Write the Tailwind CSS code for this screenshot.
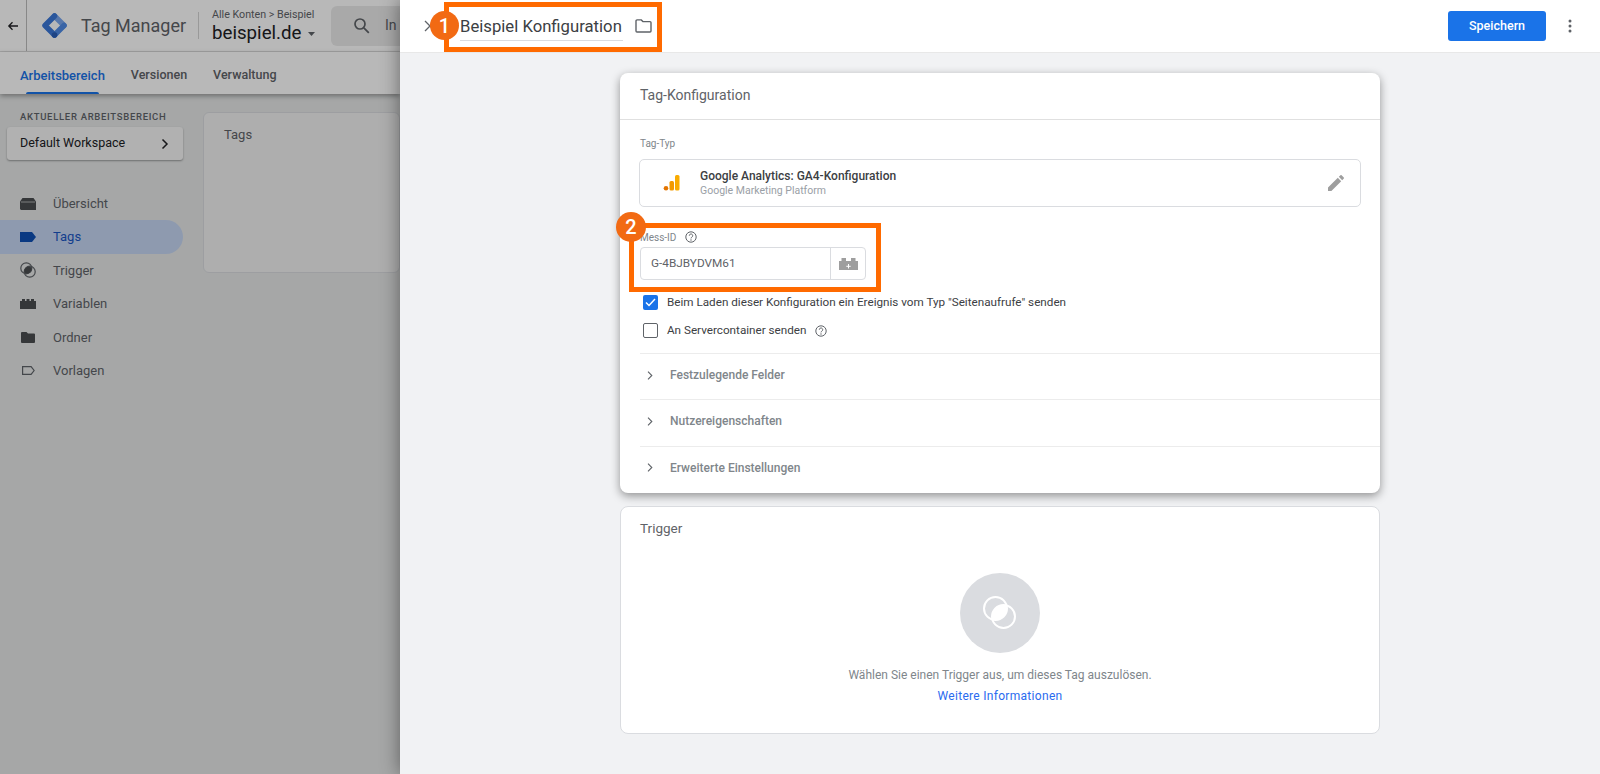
<!DOCTYPE html>
<html lang="de">
<head>
  <meta charset="UTF-8" />
  <title>Tag Manager - Beispiel Konfiguration</title>
  <script src="https://cdn.jsdelivr.net/npm/@tailwindcss/browser@4"></script>
</head>
<body class="font-['Roboto',sans-serif] bg-[#f1f2f4] text-[#202124] overflow-hidden">
<div class="relative flex w-[1600px] h-[774px] overflow-hidden">

  <!-- Linke Seite, abgedunkelt -->
  <div class="relative w-[400px] h-full shrink-0 overflow-hidden bg-[#e6e8e8]">
    <header class="h-[52px] bg-white border-b border-[#e0e0e0] flex items-center w-[700px]">
      <div class="w-[27px] shrink-0 h-full border-r border-[#bdbdbd] flex items-center justify-center">
        <svg width="12" height="12" viewBox="0 0 12 12"><path d="M11 6H2M5.500 2.200 1.800 6l3.700 3.800" fill="none" stroke="#202124" stroke-width="1.300"/></svg>
      </div>
      <svg class="ml-[15px] shrink-0" width="25" height="25" viewBox="0 0 25 25">
        <path d="M12.500 3 22 12.500" fill="none" stroke="#7aa7ee" stroke-width="5.500" stroke-linecap="round"/>
        <path d="M22 12.500 12.500 22" fill="none" stroke="#4f8be6" stroke-width="5.500" stroke-linecap="round"/>
        <path d="M12.500 3 3 12.500 12.500 22" fill="none" stroke="#3b78d8" stroke-width="5.500" stroke-linecap="round" stroke-linejoin="round"/>
        <circle cx="12.500" cy="22" r="2.800" fill="#2a5fb8"/>
      </svg>
      <span class="ml-[14px] shrink-0 text-[18px] text-[#5f6368] w-[117px] whitespace-nowrap">Tag Manager</span>
      <div class="w-px shrink-0 h-[27px] bg-[#d5d5d5]"></div>
      <div class="ml-[13px] mt-[1px] shrink-0 w-[119px]">
        <div class="text-[10.700px] leading-[14px] text-[#5f6368] whitespace-nowrap">Alle Konten &gt; Beispiel</div>
        <div class="flex items-center text-[18.700px] leading-[22px] text-[#202124]">beispiel.de
          <svg class="ml-[7px] mt-[2px]" width="7" height="4" viewBox="0 0 7 4"><path d="M0 0h7L3.500 4Z" fill="#5f6368"/></svg>
        </div>
      </div>
      <div class="shrink-0 w-[300px] h-[40px] rounded-[6px] bg-[#ebebeb] flex items-center pl-[22px]">
        <svg width="17" height="17" viewBox="0 0 17 17"><circle cx="7" cy="7" r="5" fill="none" stroke="#5f6368" stroke-width="1.700"/><path d="m10.800 10.800 5 5" stroke="#5f6368" stroke-width="1.800"/></svg>
        <span class="ml-[15px] text-[14px] text-[#5f6368]">In</span>
      </div>
    </header>
    <nav class="h-[42px] bg-white flex pl-[20px] gap-[26px] text-[12.500px] font-medium text-[#5f6368] shadow-[0_2px_5px_rgba(0,0,0,.35)] relative">
      <a class="relative pt-[14px] text-[13px] text-[#1a73e8]">Arbeitsbereich
        <span class="absolute left-[6px] right-[6px] bottom-0 h-[2px] rounded-t bg-[#1a73e8]"></span></a>
      <a class="pt-[14px]">Versionen</a>
      <a class="pt-[14px]">Verwaltung</a>
    </nav>
    <div class="flex">
      <aside class="w-[183px] shrink-0">
        <div class="pl-[20px] pt-[17px] text-[9.500px] leading-[12px] font-medium tracking-[.7px] text-[#5f6368] whitespace-nowrap">AKTUELLER ARBEITSBEREICH</div>
        <div class="ml-[7px] mt-[4px] w-[176px] h-[33px] rounded-[3px] bg-[#f6f6f6] shadow-[0_1px_2px_rgba(0,0,0,.35)] flex items-center justify-between pl-[13px] pr-[14px] text-[12.500px] text-[#202124]">
          Default Workspace
          <svg width="8" height="12" viewBox="0 0 8 12"><path d="m1.500 1.500 4.500 4.500-4.500 4.500" fill="none" stroke="#202124" stroke-width="1.500"/></svg>
        </div>
        <ul class="mt-[27px] text-[13px] text-[#5f6368]">
          <li class="h-[33.400px] flex items-center pl-[20px] gap-[17px]">
            <svg width="16" height="12" viewBox="0 0 16 12"><path d="M0 11V3.500L2.500 0h11L16 3.500V12H1Z" fill="#4a4d50"/><path d="M1 4h14" stroke="#c8c8c8" stroke-width=".8"/></svg>
            Übersicht</li>
          <li class="h-[33.400px] flex items-center pl-[20px] gap-[17px] rounded-r-full bg-[#c5d6f3] text-[#1a56c4]">
            <svg width="16" height="10" viewBox="0 0 16 10"><path d="M0 0h12l4 5-4 5H0Z" fill="#0f4fb4"/></svg>
            Tags</li>
          <li class="h-[33.400px] flex items-center pl-[20px] gap-[17px]">
            <svg width="16" height="16" viewBox="0 0 16 16"><circle cx="6.300" cy="6.300" r="5.500" fill="none" stroke="#5f6368" stroke-width="1.200"/><circle cx="9.700" cy="9.700" r="5.500" fill="none" stroke="#5f6368" stroke-width="1.200"/><path d="M9.700 4.200A5.500 5.500 0 0 1 11.800 6.300 5.500 5.500 0 0 1 6.300 11.800 5.500 5.500 0 0 1 4.200 9.700 5.500 5.500 0 0 1 9.700 4.200Z" fill="#4a4d50"/></svg>
            Trigger</li>
          <li class="h-[33.400px] flex items-center pl-[20px] gap-[17px]">
            <svg width="16" height="10" viewBox="0 0 16 10"><path d="M0 10V2h2V0h3v2h1.500V0h3v2H11V0h3v2h2v8Z" fill="#4a4d50"/></svg>
            Variablen</li>
          <li class="h-[33.400px] flex items-center pl-[21px] gap-[18px]">
            <svg width="14" height="11" viewBox="0 0 14 11"><path d="M1 0h4.500l1.500 1.500h6a1 1 0 0 1 1 1V10a1 1 0 0 1-1 1H1a1 1 0 0 1-1-1V1a1 1 0 0 1 1-1Z" fill="#4a4d50"/></svg>
            Ordner</li>
          <li class="h-[33.400px] flex items-center pl-[22px] gap-[18px]">
            <svg width="13" height="9" viewBox="0 0 13 9"><path d="M.6.6h8.500l3 3.900-3 3.900H.6Z" fill="none" stroke="#5f6368" stroke-width="1.200"/></svg>
            Vorlagen</li>
        </ul>
      </aside>
      <div class="ml-[20px] mt-[18px] w-[300px] h-[161px] rounded-[6px] bg-[#f2f2f2] border border-[#dadce0] pl-[20px] pt-[12px] text-[13px] text-[#5f6368]">Tags</div>
    </div>
    <div class="absolute inset-0 bg-black/28"></div>
  </div>

  <!-- Rechtes Panel -->
  <main class="relative flex-1 bg-[#f1f2f4] shadow-[0_0_18px_rgba(0,0,0,.45)]">
    <header class="h-[53px] bg-white border-b border-[#e8e8e8] flex items-center pl-[24px] pr-[28px]">
      <svg width="12" height="12" viewBox="0 0 12 12"><path d="m1 1 10 10M11 1 1 11" stroke="#5f6368" stroke-width="1.300"/></svg>
      <div class="ml-[24px] w-[163px] h-[29px] mt-[1px] border-b border-[#dadce0] text-[16.700px] leading-[29px] text-[#3c4043] whitespace-nowrap">Beispiel Konfiguration</div>
      <svg class="ml-[12px]" width="17" height="14" viewBox="0 0 17 14"><path d="M1 1.900a1 1 0 0 1 1-1h4.300l1.600 1.700H15a1 1 0 0 1 1 1V12a1 1 0 0 1-1 1H2a1 1 0 0 1-1-1Z" fill="none" stroke="#5f6368" stroke-width="1.400"/></svg>
      <button class="ml-auto w-[98px] h-[30px] rounded-[3px] bg-[#1a73e8] text-white text-[12.500px] font-medium">Speichern</button>
      <svg class="ml-[22px]" width="4" height="14" viewBox="0 0 4 14"><circle cx="2" cy="2" r="1.500" fill="#5f6368"/><circle cx="2" cy="7" r="1.500" fill="#5f6368"/><circle cx="2" cy="12" r="1.500" fill="#5f6368"/></svg>
    </header>

    <div class="w-[760px] ml-[220px]">
      <!-- Tag-Konfiguration -->
      <section class="mt-[20px] h-[420px] bg-white rounded-[8px] shadow-[0_3px_10px_rgba(0,0,0,.4)]">
        <div class="h-[47px] pl-[20px] pt-[12px] border-b border-[#e0e0e0] text-[14px] text-[#5f6368]">Tag-Konfiguration</div>
        <div class="pl-[20px]">
          <div class="pt-[18px] text-[10px] leading-[12px] text-[#80868b]">Tag-Typ</div>
          <div class="mt-[9px] -ml-px w-[722px] h-[48px] rounded-[5px] border border-[#dadce0] flex items-center pl-[23px] pr-[16px]">
            <svg width="18" height="18" viewBox="0 0 18 18"><rect x="12" y="1" width="4.500" height="15.500" rx="1.500" fill="#f9ab00"/><rect x="6.500" y="7" width="4.500" height="9.500" rx="1.500" fill="#f29900"/><circle cx="3" cy="14.200" r="2.300" fill="#e37400"/></svg>
            <div class="ml-[19px]">
              <div class="text-[12px] leading-[15px] font-medium text-[#3c4043]">Google Analytics: GA4-Konfiguration</div>
              <div class="text-[10.500px] leading-[14px] text-[#9aa0a6]">Google Marketing Platform</div>
            </div>
            <svg class="ml-auto" width="16" height="16" viewBox="0 0 16 16"><path d="M0 16v-3.400L9.800 2.800l3.400 3.400L3.400 16ZM10.800 1.800 12.500.2a.8.8 0 0 1 1.100 0l2.200 2.200a.8.8 0 0 1 0 1.100l-1.600 1.700Z" fill="#9e9e9e"/></svg>
          </div>
          <div class="mt-[24px] flex items-center h-[12px] text-[10px] text-[#80868b]">Mess-ID
            <svg class="ml-[9px]" width="12" height="12" viewBox="0 0 12 12"><circle cx="6" cy="6" r="5.200" fill="none" stroke="#5f6368" stroke-width="1"/><path d="M4.300 4.700a1.700 1.700 0 1 1 2.600 1.400c-.6.400-.9.700-.9 1.300" fill="none" stroke="#5f6368" stroke-width="1"/><circle cx="6" cy="9" r=".7" fill="#5f6368"/></svg>
          </div>
          <div class="mt-[4px] w-[226px] h-[33px] rounded-[4px] border border-[#dadce0] flex items-center text-[11.800px] text-[#5f6368]">
            <div class="flex-1 pl-[10px]">G-4BJBYDVM61</div>
            <div class="w-[35px] h-full border-l border-[#dadce0] flex items-center justify-center">
              <svg width="19" height="12" viewBox="0 0 19 12"><path d="M0 12V3h2.500V0h4.500v3h5V0h4.500v3H19v9Z" fill="#9e9e9e"/><path d="M9.500 6v4.500M7.300 8.300h4.400" stroke="#fff" stroke-width="1"/></svg>
            </div>
          </div>
          <label class="mt-[15px] h-[15px] flex items-center pl-[3px] text-[11.700px] text-[#3c4043]">
            <span class="w-[15px] h-[15px] rounded-[2px] bg-[#1a73e8] flex items-center justify-center">
              <svg width="11" height="9" viewBox="0 0 11 9"><path d="m1 4.500 3 3 6-6.500" fill="none" stroke="#fff" stroke-width="1.500"/></svg>
            </span>
            <span class="ml-[9px]">Beim Laden dieser Konfiguration ein Ereignis vom Typ "Seitenaufrufe" senden</span>
          </label>
          <label class="mt-[13px] h-[15px] flex items-center pl-[3px] text-[11.700px] text-[#3c4043]">
            <span class="w-[15px] h-[15px] rounded-[2px] border-[1.500px] border-[#5f6368]"></span>
            <span class="ml-[9px]">An Servercontainer senden</span>
            <svg class="ml-[8px]" width="12" height="12" viewBox="0 0 12 12"><circle cx="6" cy="6" r="5.200" fill="none" stroke="#5f6368" stroke-width="1"/><path d="M4.300 4.700a1.700 1.700 0 1 1 2.600 1.400c-.6.400-.9.700-.9 1.300" fill="none" stroke="#5f6368" stroke-width="1"/><circle cx="6" cy="9" r=".7" fill="#5f6368"/></svg>
          </label>
          <div class="mt-[15px] border-t border-[#ececec] h-[46.300px] pb-[3px] flex items-center text-[12px] font-medium text-[#80868b]">
            <svg class="ml-[7px]" width="6" height="9" viewBox="0 0 6 9"><path d="m1 .7 3.800 3.800L1 8.300" fill="none" stroke="#5f6368" stroke-width="1.100"/></svg>
            <span class="ml-[17px]">Festzulegende Felder</span>
          </div>
          <div class="border-t border-[#ececec] h-[46.300px] pb-[3px] flex items-center text-[12px] font-medium text-[#80868b]">
            <svg class="ml-[7px]" width="6" height="9" viewBox="0 0 6 9"><path d="m1 .7 3.800 3.800L1 8.300" fill="none" stroke="#5f6368" stroke-width="1.100"/></svg>
            <span class="ml-[17px]">Nutzereigenschaften</span>
          </div>
          <div class="border-t border-[#ececec] h-[46.300px] pb-[3px] flex items-center text-[12px] font-medium text-[#80868b]">
            <svg class="ml-[7px]" width="6" height="9" viewBox="0 0 6 9"><path d="m1 .7 3.800 3.800L1 8.300" fill="none" stroke="#5f6368" stroke-width="1.100"/></svg>
            <span class="ml-[17px]">Erweiterte Einstellungen</span>
          </div>
        </div>
      </section>

      <!-- Trigger -->
      <section class="mt-[13px] h-[228px] bg-white rounded-[8px] border border-[#dadce0] flex flex-col items-center">
        <div class="self-start pl-[19px] pt-[12px] text-[13.500px] leading-[18px] text-[#5f6368]">Trigger</div>
        <div class="mt-[36px] w-[80px] h-[80px] rounded-full bg-[#dadce0] flex items-center justify-center">
          <svg width="34" height="34" viewBox="0 0 34 34">
            <clipPath id="lens"><circle cx="12.500" cy="12.500" r="11.500"/></clipPath>
            <circle cx="20.500" cy="20.500" r="11.500" fill="#fff" clip-path="url(#lens)"/>
            <circle cx="12.500" cy="12.500" r="11.500" fill="none" stroke="#fff" stroke-width="2"/>
            <circle cx="20.500" cy="20.500" r="11.500" fill="none" stroke="#fff" stroke-width="2"/>
          </svg>
        </div>
        <p class="mt-[14px] text-[12px] leading-[16px] text-[#80868b]">Wählen Sie einen Trigger aus, um dieses Tag auszulösen.</p>
        <a class="mt-[5px] text-[12px] leading-[16px] text-[#2a6bef] tracking-[.3px]">Weitere Informationen</a>
      </section>
    </div>
  </main>

  <!-- Markierungen -->
  <div class="absolute left-[444px] top-[2px] w-[218px] h-[50px] border-[5px] border-[#ff6a00]"></div>
  <div class="absolute left-[430px] top-[11px] w-[29px] h-[29px] rounded-full bg-[#f26a13] text-white text-[20px] font-medium flex items-center justify-center">1</div>
  <div class="absolute left-[629px] top-[223px] w-[252px] h-[69px] border-[5px] border-[#ff6a00]"></div>
  <div class="absolute left-[616px] top-[212px] w-[30px] h-[30px] rounded-full bg-[#f26a13] text-white text-[20px] font-medium flex items-center justify-center">2</div>
</div>
</body>
</html>
